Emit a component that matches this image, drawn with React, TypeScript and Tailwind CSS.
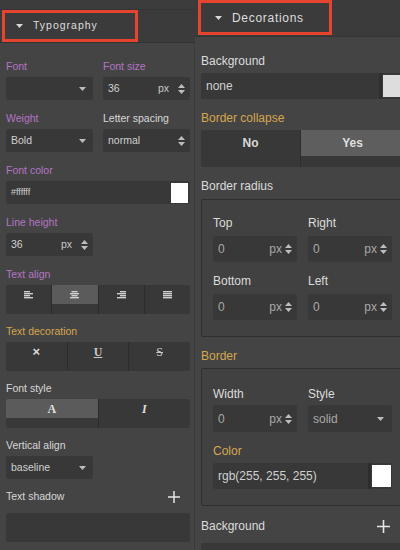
import React from 'react'

const Caret = ({ className = '' }: { className?: string }) => (
  <svg width="7" height="4" viewBox="0 0 7 4" className={className}>
    <path d="M0 0h7L3.5 4z" fill="currentColor" />
  </svg>
)

const Spinner = () => (
  <svg width="7" height="12" viewBox="0 0 7 12" className="text-[#bdbdbd]">
    <path d="M0 5h7L3.5 1z M0 7h7L3.5 11z" fill="currentColor" />
  </svg>
)

const Plus = ({ size = 13 }: { size?: number }) => (
  <svg width={size} height={size} viewBox="0 0 13 13" className="text-[#e6e6e6]">
    <path d="M6.5 0v13M0 6.5h13" stroke="currentColor" strokeWidth="1.6" />
  </svg>
)

const AlignIcon = ({ kind }: { kind: 'left' | 'center' | 'right' | 'justify' }) => {
  const widths = [6, 9, 6, 9]
  return (
    <svg width="9" height="8" viewBox="0 0 9 8" className="text-[#cfcfcf]">
      {widths.map((ww, i) => {
        const w = kind === 'justify' ? 9 : ww
        const x = kind === 'left' || kind === 'justify' ? 0 : kind === 'right' ? 9 - w : (9 - w) / 2
        return <rect key={i} x={x} y={i * 2} width={w} height="1.4" fill="currentColor" />
      })}
    </svg>
  )
}

// left panel (smaller scale)
function LField({ label, color, children }: { label: string; color: string; children: React.ReactNode }) {
  return (
    <div className="flex flex-col">
      <div className={`h-[16px] leading-[16px] text-[10.5px] ${color}`}>{label}</div>
      <div className="mt-[3px]">{children}</div>
    </div>
  )
}

function LSelect({ value }: { value: string }) {
  return (
    <div className="h-[23px] bg-[#383838] rounded-[2px] flex items-center justify-between pl-[5px] pr-[7px] text-[10.5px] text-[#d0d0d0]">
      <span>{value}</span>
      <Caret className="text-[#bdbdbd]" />
    </div>
  )
}

function LNumber({ value, unit }: { value: string; unit?: string }) {
  return (
    <div className="h-[23px] bg-[#383838] rounded-[2px] flex items-center pl-[5px] pr-[5px] text-[10.5px] text-[#d0d0d0]">
      <span className="flex-1">{value}</span>
      {unit && <span className="mr-[9px] text-[#c8c8c8]">{unit}</span>}
      <Spinner />
    </div>
  )
}

function ButtonRow({ items, active }: { items: React.ReactNode[]; active: number }) {
  return (
    <div className="flex h-[29px] bg-[#383838] rounded-[2px] overflow-hidden">
      {items.map((it, i) => (
        <div key={i} className={`flex-1 flex flex-col ${i > 0 ? 'border-l border-[#2c2c2c]' : ''}`}>
          <div className={`h-[19px] flex items-center justify-center ${i === active ? 'bg-[#5b5b5b]' : ''}`}>{it}</div>
          <div className="flex-1" />
        </div>
      ))}
    </div>
  )
}

// right panel (larger scale)
function RNumber({ value, unit, h = 'h-[26px]' }: { value: string; unit: string; h?: string }) {
  return (
    <div className={`${h} bg-[#383838] rounded-[2px] flex items-center pl-[5px] pr-[5px] text-[12px] text-[#a8a8a8]`}>
      <span className="flex-1">{value}</span>
      <span className="mr-[3px]">{unit}</span>
      <Spinner />
    </div>
  )
}

function RLabel({ children, gold }: { children: React.ReactNode; gold?: boolean }) {
  return (
    <div className={`h-[16px] leading-[16px] text-[12px] ${gold ? 'text-[#d6a64e]' : 'text-[#dcdcdc]'}`}>{children}</div>
  )
}

const purple = 'text-[#b474c6]'
const gold = 'text-[#d6a64e]'
const plain = 'text-[#d8d8d8]'
const serif = { fontFamily: '"Liberation Serif", serif' }

export default function App() {
  return (
    <div
      className="w-[400px] h-[550px] flex overflow-hidden bg-[#444444]"
      style={{ fontFamily: '"Liberation Sans", Arial, sans-serif' }}
    >
      {/* Typography */}
      <div className="w-[195px] shrink-0 flex flex-col border-r border-[#3a3a3a]">
        <div className="h-[10px] bg-[#3c3c3c] border-b border-[#333333]" />
        <div className="h-[33px] bg-[#3b3b3b] border-b border-[#333333] flex">
          <div className="ml-[2px] w-[136px] h-full border-[3px] border-[#e5452f] flex items-center pl-[11px] gap-[10px]">
            <Caret className="text-[#d8d8d8]" />
            <span className="text-[10.5px] tracking-[1px] text-[#dedede]">Typography</span>
          </div>
        </div>

        <div className="flex flex-col pl-[6px] pr-[4px] pt-[15px]">
          <div className="grid grid-cols-2 gap-x-[10px]">
            <LField label="Font" color={purple}>
              <LSelect value="" />
            </LField>
            <LField label="Font size" color={purple}>
              <LNumber value="36" unit="px" />
            </LField>
          </div>

          <div className="grid grid-cols-2 gap-x-[10px] mt-[10px]">
            <LField label="Weight" color={purple}>
              <LSelect value="Bold" />
            </LField>
            <LField label="Letter spacing" color={plain}>
              <LNumber value="normal" />
            </LField>
          </div>

          <div className="mt-[10px]">
            <LField label="Font color" color={purple}>
              <div className="h-[23px] bg-[#383838] rounded-[2px] flex items-center justify-between pl-[5px] pr-[2px]">
                <span className="text-[9px] text-[#cfcfcf]">#ffffff</span>
                <div className="w-[17px] h-[20px] bg-white" />
              </div>
            </LField>
          </div>

          <div className="grid grid-cols-2 gap-x-[10px] mt-[10px]">
            <LField label="Line height" color={purple}>
              <LNumber value="36" unit="px" />
            </LField>
          </div>

          <div className="mt-[10px]">
            <LField label="Text align" color={purple}>
              <ButtonRow
                active={1}
                items={[
                  <AlignIcon key="l" kind="left" />,
                  <AlignIcon key="c" kind="center" />,
                  <AlignIcon key="r" kind="right" />,
                  <AlignIcon key="j" kind="justify" />,
                ]}
              />
            </LField>
          </div>

          <div className="mt-[9px]">
            <LField label="Text decoration" color={gold}>
              <ButtonRow
                active={-1}
                items={[
                  <span key="x" className="text-[13px] font-bold text-[#dcdcdc] leading-none">×</span>,
                  <span key="u" className="text-[12px] font-bold underline text-[#c8c8c8] leading-none" style={serif}>U</span>,
                  <span key="s" className="text-[12px] line-through text-[#c8c8c8] leading-none" style={serif}>S</span>,
                ]}
              />
            </LField>
          </div>

          <div className="mt-[9px]">
            <LField label="Font style" color={plain}>
              <ButtonRow
                active={0}
                items={[
                  <span key="a" className="text-[12px] font-bold text-[#e0e0e0] leading-none" style={serif}>A</span>,
                  <span key="i" className="text-[12px] font-bold italic text-[#e0e0e0] leading-none" style={serif}>I</span>,
                ]}
              />
            </LField>
          </div>

          <div className="grid grid-cols-2 gap-x-[10px] mt-[9px]">
            <LField label="Vertical align" color={plain}>
              <div className="h-[24px]">
                <LSelect value="baseline" />
              </div>
            </LField>
          </div>

          <div className="mt-[9px] flex items-center justify-between h-[16px] pr-[10px]">
            <span className={`text-[10.5px] ${plain}`}>Text shadow</span>
            <Plus size={12} />
          </div>
          <div className="mt-[8px] h-[29px] bg-[#383838] rounded-[2px]" />
        </div>
      </div>

      {/* Decorations */}
      <div className="flex-1 min-w-0 overflow-hidden">
        <div className="w-[215px] flex flex-col">
          <div className="h-[37px] bg-[#3b3b3b] border-b border-[#333333] flex items-start pl-[3px]">
            <div className="w-[134px] h-[35px] border-[3px] border-[#e5452f] flex items-center pl-[14px] gap-[10px]">
              <Caret className="text-[#d8d8d8]" />
              <span className="text-[12px] tracking-[0.7px] text-[#dedede]">Decorations</span>
            </div>
          </div>

          <div className="flex flex-col pl-[6px] pr-[6px] pt-[16px]">
            <RLabel>Background</RLabel>
            <div className="mt-[4px] h-[26px] bg-[#383838] rounded-[2px] flex items-stretch">
              <span className="flex-1 flex items-center pl-[5px] text-[12px] text-[#d0d0d0] border-r-[3px] border-[#2e2e2e]">none</span>
              <div className="w-[20px] my-[2px] mx-[1px] bg-[#dddddd]" />
            </div>

            <div className="mt-[11px]">
              <RLabel gold>Border collapse</RLabel>
            </div>
            <div className="mt-[4px] h-[37px] bg-[#383838] rounded-[2px] flex overflow-hidden">
              <div className="w-[99px] flex flex-col">
                <div className="h-[26px] flex items-center justify-center text-[12px] font-bold text-[#d8d8d8]">No</div>
              </div>
              <div className="flex-1 flex flex-col border-l border-[#2e2e2e]">
                <div className="h-[26px] bg-[#5e5e5e] flex items-center justify-center text-[12px] font-bold text-[#dedede]">Yes</div>
              </div>
            </div>

            <div className="mt-[11px]">
              <RLabel>Border radius</RLabel>
            </div>
            <div className="mt-[5px] border border-[#2f2f2f] rounded-[2px] bg-[#414141] pl-[11px] pr-[11px] pt-[15px] pb-[16px]">
              <div className="grid grid-cols-2 gap-x-[11px]">
                <div>
                  <RLabel>Top</RLabel>
                  <div className="mt-[5px]"><RNumber value="0" unit="px" /></div>
                </div>
                <div>
                  <RLabel>Right</RLabel>
                  <div className="mt-[5px]"><RNumber value="0" unit="px" /></div>
                </div>
              </div>
              <div className="grid grid-cols-2 gap-x-[11px] mt-[11px]">
                <div>
                  <RLabel>Bottom</RLabel>
                  <div className="mt-[5px]"><RNumber value="0" unit="px" /></div>
                </div>
                <div>
                  <RLabel>Left</RLabel>
                  <div className="mt-[5px]"><RNumber value="0" unit="px" /></div>
                </div>
              </div>
            </div>

            <div className="mt-[11px]">
              <RLabel gold>Border</RLabel>
            </div>
            <div className="mt-[4px] border border-[#2f2f2f] rounded-[2px] bg-[#414141] pl-[11px] pr-[11px] pt-[17px] pb-[16px]">
              <div className="grid grid-cols-2 gap-x-[11px]">
                <div>
                  <RLabel>Width</RLabel>
                  <div className="mt-[3px]"><RNumber value="0" unit="px" h="h-[27px]" /></div>
                </div>
                <div>
                  <RLabel>Style</RLabel>
                  <div className="mt-[3px] h-[27px] bg-[#383838] rounded-[2px] flex items-center justify-between pl-[5px] pr-[8px] text-[12px] text-[#a8a8a8]">
                    <span>solid</span>
                    <Caret className="text-[#bdbdbd]" />
                  </div>
                </div>
              </div>
              <div className="mt-[11px]">
                <RLabel gold>Color</RLabel>
              </div>
              <div className="mt-[4px] h-[26px] bg-[#383838] rounded-[2px] flex items-stretch">
                <span className="flex-1 flex items-center pl-[5px] text-[12px] text-[#d0d0d0] border-r-[3px] border-[#2e2e2e]">rgb(255, 255, 255)</span>
                <div className="w-[19px] my-[2px] mx-[1px] bg-white" />
              </div>
            </div>

            <div className="mt-[12px] flex items-center justify-between pr-[14px]">
              <RLabel>Background</RLabel>
              <Plus size={13} />
            </div>
            <div className="mt-[9px] h-[26px] bg-[#383838] rounded-[2px]" />
          </div>
        </div>
      </div>
    </div>
  )
}
